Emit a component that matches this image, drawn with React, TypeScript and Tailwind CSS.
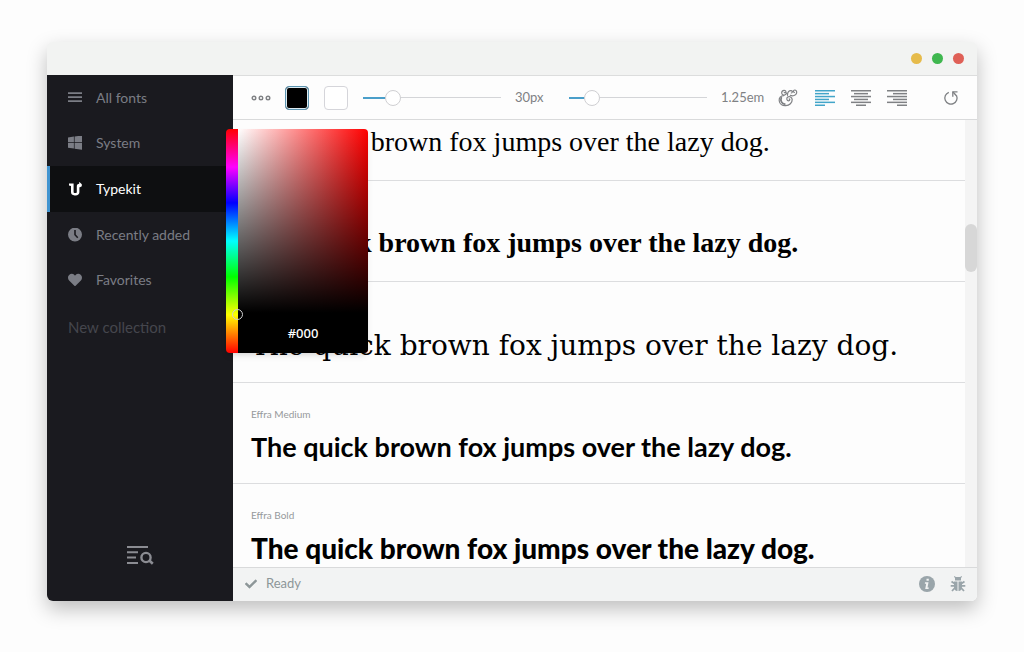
import React, { useState } from "react";
import { FaCheck, FaHeart } from "react-icons/fa";

const collections = [
  { name: "All fonts", icon: "list" },
  { name: "System", icon: "windows" },
  { name: "Typekit", icon: "typekit" },
  { name: "Recently added", icon: "clock" },
  { name: "Favorites", icon: "heart" },
];

const sample = "The quick brown fox jumps over the lazy dog.";

const previews = [
  { id: 1, label: "", style: "font-['Liberation_Serif',serif] text-[28px] leading-9" },
  { id: 2, label: "", style: "font-['Liberation_Serif',serif] text-[28px] leading-9 font-bold" },
  { id: 3, label: "", style: "font-['DejaVu_Serif',serif] text-[28px] leading-10" },
  { id: 4, label: "Effra Medium", style: "text-[27px] leading-10 font-bold" },
  { id: 5, label: "Effra Bold", style: "text-[28px] leading-10 font-black" },
];

const NavIcon = ({ name }: { name: string }) => {
  if (name === "heart") return <FaHeart size={14} />;
  return (
    <svg width="14" height="14" viewBox="0 0 14 14" fill="currentColor">
      {name === "list" && <path d="M0 1.300h14v1.700H0zM0 5.300h14V7H0zM0 9.300h14V11H0z" />}
      {name === "windows" && (
        <path d="M0 1.400l5.900-.8v5.700H0zM6.600.5L14-.5v6.800H6.600zM0 7h5.900v5.600L0 11.800zM6.600 7H14v6.700l-7.400-1z" />
      )}
      {name === "typekit" && (
        <path d="M1 1.500h4.600V10c0 .7.300 1 .9 1H7.800c.7 0 1-.4 1-1.200V4.500c0-1.800.8-2.700 2.400-2.700V-.2L13.800 2.300v1.900L12 5.200h-.6v5c0 2-1.500 3.200-3.800 3.200h-1c-2.300 0-3.600-1.200-3.600-3.300V3.900L1 3.400z" />
      )}
      {name === "clock" && (
        <path
          fillRule="evenodd"
          d="M7-1a7 7 0 1 1 0 14A7 7 0 0 1 7-1zM6.200 1.500v5l3 3.200 1.100-1-2.500-2.900V1.500z"
          transform="translate(0 .6)"
        />
      )}
    </svg>
  );
};

const AlignIcon = ({ align }: { align: string }) => {
  const widths = [20, 14, 20, 14, 20, 10];
  return (
    <svg width="20" height="16" viewBox="0 0 20 16" fill="currentColor">
      {widths.map((w, i) => (
        <rect
          key={i}
          x={align === "left" ? 0 : align === "center" ? (20 - w) / 2 : 20 - w}
          y={i * 2.9}
          width={w}
          height="1.5"
        />
      ))}
    </svg>
  );
};

const Slider = ({ label, start, fill }: { label: string; start: number; fill: string }) => {
  const [value, setValue] = useState(start);
  return (
    <input
      type="range"
      aria-label={label}
      value={value}
      onChange={(e) => setValue(Number(e.target.value))}
      className={`h-5 w-[138px] appearance-none bg-[image:linear-gradient(#4a9fca,#4a9fca),linear-gradient(#d4d5d8,#d4d5d8)] bg-left bg-no-repeat [&::-webkit-slider-thumb]:size-4 [&::-webkit-slider-thumb]:appearance-none [&::-webkit-slider-thumb]:rounded-full [&::-webkit-slider-thumb]:border [&::-webkit-slider-thumb]:border-[#cfcfd2] [&::-webkit-slider-thumb]:bg-white ${fill}`}
    />
  );
};

const Sidebar = () => {
  const [active, setActive] = useState("Typekit");
  return (
    <aside className="flex w-[186px] shrink-0 flex-col bg-[#1a1a1f] text-[#7b7d85]">
      <nav className="grid h-[228px] grid-rows-5">
        {collections.map((item) => (
          <button
            key={item.name}
            onClick={() => setActive(item.name)}
            className={`flex items-center gap-3.5 border-l-[3px] pl-[18px] text-left text-sm ${
              active === item.name
                ? "border-[#4194d0] bg-[#0e0f11] text-white"
                : "border-transparent"
            }`}
          >
            <NavIcon name={item.icon} />
            {item.name}
          </button>
        ))}
      </nav>
      <input
        aria-label="New collection"
        placeholder="New collection"
        className="mt-3.5 w-full px-[21px] text-[15px] leading-5 outline-none placeholder:text-[#45464d]"
      />
      <button aria-label="Search fonts" className="mx-auto mt-auto mb-9">
        <svg
          width="28"
          height="20"
          viewBox="0 0 28 20"
          fill="none"
          stroke="#8b8c92"
          strokeWidth="2"
        >
          <path d="M1 2h21M1 7.300h11M1 12.600h9M1 18h11" />
          <circle cx="20" cy="12.500" r="4.600" strokeWidth="2.400" />
          <path d="M23.300 15.500l3.500 3.300" strokeWidth="2.600" />
        </svg>
      </button>
    </aside>
  );
};

const Picker = () => (
  <div className="absolute top-[9px] -left-[7px] z-10 flex h-[224px] w-[142px] overflow-hidden rounded shadow-md">
    <div className="w-3 bg-[linear-gradient(to_bottom,#f00_0%,#f0f_17%,#00f_33%,#0ff_50%,#0f0_66%,#ff0_83%,#f00_100%)]" />
    <div className="flex flex-1 flex-col justify-end bg-[linear-gradient(to_top,#000_18%,transparent),linear-gradient(to_right,#fff,#f00)]">
      <input
        aria-label="Hex colour"
        defaultValue="#000"
        className="h-10 w-full text-center font-['Noto_Sans',sans-serif] text-[13px] font-medium text-white outline-none"
      />
    </div>
    <div className="absolute top-[180px] left-[6px] size-[11px] rounded-full border border-[#d0d0d0]" />
  </div>
);

const Toolbar = () => {
  const [align, setAlign] = useState("left");
  return (
    <div className="flex h-[44px] shrink-0 items-center border-b border-[#d9dadb] px-[18px] text-[13px] text-[#7f8184]">
      <button aria-label="More options" className="mr-[14px]">
        <svg width="20" height="6" viewBox="0 0 20 6" fill="none" stroke="currentColor" strokeWidth="1.400">
          <circle cx="3" cy="3" r="1.800" />
          <circle cx="10" cy="3" r="1.800" />
          <circle cx="17" cy="3" r="1.800" />
        </svg>
      </button>
      <button
        aria-label="Text colour"
        className="mr-[15px] size-6 rounded border border-[#5b94b0] bg-black shadow-[inset_0_0_0_1px_#dcebf2]"
      />
      <button
        aria-label="Background colour"
        className="mr-[15px] size-6 rounded border border-[#d5d5da] bg-white"
      />
      <Slider label="Font size" start={18} fill="bg-[length:22%_2px,100%_1px]" />
      <span className="w-[68px] pl-[14px]">30px</span>
      <Slider label="Line height" start={12} fill="bg-[length:17%_2px,100%_1px]" />
      <span className="w-[71px] pl-[14px]">1.25em</span>
      <button aria-label="Ligatures">
        <svg
          width="20"
          height="20"
          viewBox="0 0 20 20"
          fill="none"
          stroke="currentColor"
          strokeWidth="1.200"
          strokeLinecap="round"
        >
          <path d="M8.600 5.200c-.4 1.500-2.200 2.300-3.700 1.500C3.200 5.900 3.300 3.500 5 2.600c1.300-.7 3 0 2.900 1.300-.1.900-1.300 1.200-1.700.4" />
          <path d="M5.800 7.600C2.600 7.600.9 10 1.200 12.700c.3 3.300 3.200 5.100 6.500 4.900 3.800-.2 6.600-2.800 6.500-6-.1-2.500-2.800-3.800-4.500-2.500-1.600 1.200-.9 3.700.9 3.700 1.300 0 1.600-1.600.6-1.900" />
          <path d="M3.300 9.800c-1.200 2.600.4 6 3.500 6.400" strokeWidth="1.800" />
          <path d="M9.500 7.300c-.2-3 1.600-5 3.700-4.700 1.500.3 1.500 2.300.1 2.400M12.300 7.300c2.400 1.200 5.600.1 6.300-2.200.6-2-1-3.600-2.500-2.900-1.100.5-.9 2.200.3 2.100" />
        </svg>
      </button>
      <div className="ml-[17px] flex gap-4">
        {["left", "center", "right"].map((side) => (
          <button
            key={side}
            aria-label={`Align ${side}`}
            onClick={() => setAlign(side)}
            className={align === side ? "text-[#42a5c9]" : ""}
          >
            <AlignIcon align={side} />
          </button>
        ))}
      </div>
      <button aria-label="Reset" className="ml-auto">
        <svg width="16" height="16" viewBox="0 0 16 16" fill="none" stroke="currentColor" strokeWidth="1.300">
          <path d="M5.800 2.300A6.100 6.100 0 1 0 13.500 5.500" />
          <path d="M14.500 1.800H9.800v5" />
          <path d="M10 2l3.600 4" />
        </svg>
      </button>
    </div>
  );
};

const App = () => {
  return (
    <div className="flex h-screen flex-col bg-[#fdfdfd] px-[47px] pt-[42px] pb-[51px] font-['Lato',sans-serif]">
      <div className="flex min-h-0 flex-1 flex-col overflow-hidden rounded-md bg-[#f2f3f2] shadow-[0_8px_20px_rgba(0,0,0,0.25)]">
        <header className="flex h-[33px] shrink-0 items-center justify-end gap-[10px] pr-[13px]">
          <button aria-label="Minimize" className="size-[11px] rounded-full bg-[#e6bb4b]" />
          <button aria-label="Maximize" className="size-[11px] rounded-full bg-[#3fb74f]" />
          <button aria-label="Close" className="size-[11px] rounded-full bg-[#df6057]" />
        </header>
        <div className="flex min-h-0 flex-1">
          <Sidebar />
          <div className="flex min-w-0 flex-1 flex-col border-t border-[#dcdddd] bg-[#fdfdfd]">
            <Toolbar />
            <div className="relative flex min-h-0 flex-1">
              <Picker />
              <main className="min-w-0 flex-1 overflow-hidden">
                <div className="-mt-10">
                  {previews.map((font) => (
                    <section
                      key={font.id}
                      className="h-[101px] border-b border-[#dcdddf] px-[18px] pt-[23px]"
                    >
                      <h2 className="h-4 text-[10px] leading-4 text-[#96999b]">{font.label}</h2>
                      <p className={`mt-[5px] whitespace-nowrap text-black ${font.style}`}>
                        {sample}
                      </p>
                    </section>
                  ))}
                </div>
              </main>
              <div className="w-3 shrink-0 bg-[#f4f4f4] pt-[104px]">
                <div className="h-12 rounded-full bg-[#d7d7d7]" />
              </div>
            </div>
            <footer className="flex h-[34px] shrink-0 items-center border-t border-[#d9dadb] bg-[#f2f3f3] pr-[11px] pb-0.5 pl-3 text-[13px] text-[#8d9698]">
              <FaCheck size={12} className="mr-[9px]" />
              Ready
              <div className="ml-auto flex gap-[15px] text-[#9aa5aa]">
                <button aria-label="About">
                  <svg width="16" height="16" viewBox="0 0 16 16">
                    <circle cx="8" cy="8" r="8" fill="currentColor" />
                    <path d="M7.500 2.800h2.300v2H7.500zM6 6.200h3.500l-1 5.300h1.300L9.500 13H6.200l1-5.300H5.800z" fill="#f2f3f3" />
                  </svg>
                </button>
                <button aria-label="Report a bug">
                  <svg width="16" height="16" viewBox="0 0 16 16" fill="currentColor">
                    <path d="M4.500 0l1.300 1h4.400l1.300-1 .5.700-1 1.300v2.600H5V2L4 .7z" />
                    <path d="M4 5.500h3.500V15H6.800C4.800 14.500 4 13 4 11zM8.500 5.500H12V11c0 2-.8 3.500-2.800 4h-.7z" />
                    <path
                      d="M4.500 7.500L1.500 5.500M11.500 7.500l3-2M4.500 9.800H.7M11.500 9.800h3.800M4.800 12L2 15M11.200 12l2.800 3"
                      fill="none"
                      stroke="currentColor"
                      strokeWidth="1.800"
                    />
                  </svg>
                </button>
              </div>
            </footer>
          </div>
        </div>
      </div>
    </div>
  );
};

export default App;
